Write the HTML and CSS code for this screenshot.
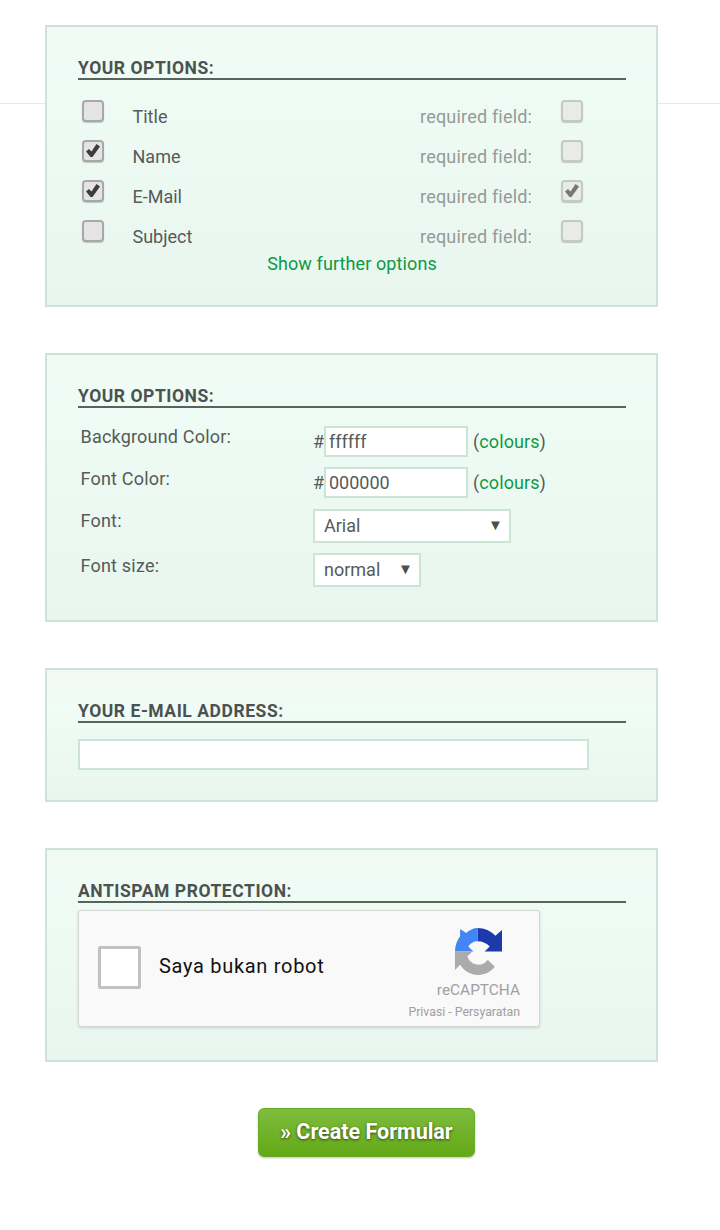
FILE: index.html
```html
<!DOCTYPE html>
<html lang="en">
  <head>
    <meta charset="UTF-8" />
    <meta name="viewport" content="width=device-width, initial-scale=1.0" />
    <title>Create Formular</title>
    <link rel="stylesheet" href="styles.css">
  </head>
  <body>
    <div class="hairline"></div>
    <form class="page">
      <div class="box">
        <h3>Your options:</h3>
        <div class="option-list">
          <div class="option">
            <span class="check"></span>
            <span>Title</span>
            <span class="req-label">required field:</span>
            <span class="check off"></span>
          </div>
          <div class="option">
            <span class="check">
              <svg viewBox="0 0 22 22"><path d="M4 11.5l3-2.5 2.5 2.5 5-7.5 3.5 2.5-7.5 10.5h-2z" /></svg>
            </span>
            <span>Name</span>
            <span class="req-label">required field:</span>
            <span class="check off"></span>
          </div>
          <div class="option">
            <span class="check">
              <svg viewBox="0 0 22 22"><path d="M4 11.5l3-2.5 2.5 2.5 5-7.5 3.5 2.5-7.5 10.5h-2z" /></svg>
            </span>
            <span>E-Mail</span>
            <span class="req-label">required field:</span>
            <span class="check off">
              <svg viewBox="0 0 22 22"><path d="M4 11.5l3-2.5 2.5 2.5 5-7.5 3.5 2.5-7.5 10.5h-2z" /></svg>
            </span>
          </div>
          <div class="option">
            <span class="check"></span>
            <span>Subject</span>
            <span class="req-label">required field:</span>
            <span class="check off"></span>
          </div>
        </div>
        <a class="link further" href="#">Show further options</a>
      </div>

      <div class="box">
        <h3>Your options:</h3>
        <div class="style-list">
          <div class="style-row">
            <label>Background Color:</label>
            <div class="field">
              <span class="hash">#</span>
              <input class="text-input color-input" type="text" value="ffffff">
              <span class="colours">(<a class="link" href="#">colours</a>)</span>
            </div>
          </div>
          <div class="style-row">
            <label>Font Color:</label>
            <div class="field">
              <span class="hash">#</span>
              <input class="text-input color-input" type="text" value="000000">
              <span class="colours">(<a class="link" href="#">colours</a>)</span>
            </div>
          </div>
          <div class="style-row tall">
            <label>Font:</label>
            <div class="select-wrap font-select">
              <select><option>Arial</option></select>
            </div>
          </div>
          <div class="style-row tall">
            <label>Font size:</label>
            <div class="select-wrap size-select">
              <select><option>normal</option></select>
            </div>
          </div>
        </div>
      </div>

      <div class="box">
        <h3>Your e-mail address:</h3>
        <input class="text-input email-input" type="text">
      </div>

      <div class="box">
        <h3>Antispam protection:</h3>
        <div class="captcha">
          <span class="captcha-box"></span>
          <span class="captcha-text">Saya bukan robot</span>
          <div class="captcha-brand">
            <svg class="captcha-logo" viewBox="0 0 46 46">
              <path fill="#1c3aa9" d="M22 0C29 0 35 3 39.5 7.5L46 2V23H29L34 18C31 15 27 13 22 13Z" />
              <path fill="#4285f4" d="M5 1L11 5C14 2 18 0 22 0V13C18 13 15 15 13 18L18 23H0C0 17 2 12 5 8Z" />
              <path fill="#ababab" d="M0 23H17L12 28C14 33 18 36 23 36C27 36 30 34 32 31L39 38C35 43 29 46 23 46C15 46 9 42 5 36L0 41Z" />
            </svg>
            <span class="captcha-name">reCAPTCHA</span>
            <span class="captcha-terms">Privasi - Persyaratan</span>
          </div>
        </div>
      </div>

      <div class="actions">
        <button class="submit" type="button">» Create Formular</button>
      </div>
    </form>
  </body>
</html>
```

FILE: styles.css
```css
body {
  font-family: Roboto, Arial, sans-serif;
  background-color: #fff;
  color: #555b58;
  margin: 0;
}

.hairline {
  position: absolute;
  top: 103px;
  left: 0;
  right: 0;
  height: 1px;
  background-color: #e4ebe7;
}

.page {
  position: relative;
  width: 613px;
  margin-left: 45px;
  padding-top: 25px;
  padding-bottom: 73px;
}

.box {
  box-sizing: border-box;
  display: flow-root;
  margin-bottom: 46px;
  padding: 31px 30px 31px 31px;
  border: 2px solid #cce4d5;
  background: linear-gradient(#f2f9f5 0, #effcf6 45px, #e9f6ef 100%);
}

.box h3 {
  margin: 0;
  height: 20px;
  font-size: 17.5px;
  line-height: 20px;
  letter-spacing: 0.55px;
  font-weight: 700;
  text-transform: uppercase;
  color: #4b524f;
  border-bottom: 2px solid #5a625e;
}

.link {
  color: #0d9a43;
  text-decoration: none;
}

.option-list {
  display: flex;
  flex-direction: column;
  gap: 3px;
  margin-top: 17px;
  padding-left: 4px;
}

.option {
  display: grid;
  grid-template-columns: 50.5px 287.5px 141px 22px;
  height: 37px;
  font-size: 18px;
  line-height: 26px;
}

.option > span:not(.check) {
  margin-top: 7px;
}

.req-label {
  color: #939b97;
  letter-spacing: 0.2px;
}

.check {
  box-sizing: border-box;
  width: 22px;
  height: 22px;
  margin-top: 3px;
  border: 2px solid #a8a8a8;
  border-radius: 4px;
  background-color: #e4e4e4;
  box-shadow: 0 1px 1px rgba(0, 0, 0, 0.2);
}

.check svg {
  display: block;
  width: 22px;
  height: 22px;
  margin: -2px;
  fill: #3d3d3d;
}

.check.off {
  border-color: #c6c8c6;
  background-color: #e9ebe9;
}

.check.off svg {
  fill: #777;
}

.further {
  display: block;
  text-align: center;
  font-size: 18px;
  line-height: 20px;
  letter-spacing: 0.1px;
}

.style-list {
  margin-top: 18px;
  padding-left: 2.5px;
  margin-bottom: 2px;
}

.style-row {
  display: grid;
  grid-template-columns: 232.5px 1fr;
  height: 31px;
  margin-bottom: 10px;
  font-size: 18px;
  letter-spacing: 0.2px;
  line-height: 22px;
}

.style-row:nth-child(2) {
  margin-bottom: 11px;
}

.style-row:nth-child(n+2) label {
  line-height: 24px;
}

.style-row.tall {
  height: 34px;
}

.style-row:last-child {
  margin-bottom: 0;
}

.style-row:last-child label {
  line-height: 26px;
}

.field {
  display: flex;
  align-items: center;
  font-size: 18px;
  letter-spacing: 0.1px;
}

.hash {
  width: 11px;
}

.colours {
  margin-left: 5px;
}

.text-input {
  box-sizing: border-box;
  height: 31px;
  padding: 0 3px;
  border: 2px solid #cce4d5;
  border-radius: 0;
  background-color: #fff;
  color: #555b58;
  font-family: Roboto, Arial, sans-serif;
  font-size: 18px;
  outline: none;
}

.color-input {
  width: 144px;
}

.email-input {
  display: block;
  width: 511px;
  margin-top: 16px;
  margin-bottom: -1px;
}

.select-wrap {
  position: relative;
  height: 34px;
}

.select-wrap::after {
  content: "▼";
  position: absolute;
  top: 0;
  right: 8px;
  font-size: 15px;
  line-height: 32px;
  color: #4b4f4d;
  pointer-events: none;
}

.font-select {
  width: 198px;
}

.size-select {
  width: 108px;
}

.select-wrap select {
  box-sizing: border-box;
  width: 100%;
  height: 34px;
  padding: 0 9px 2px;
  border: 2px solid #cce4d5;
  border-radius: 0;
  background-color: #fff;
  color: #555b58;
  font-family: Roboto, Arial, sans-serif;
  font-size: 18px;
  appearance: none;
  -webkit-appearance: none;
}

.captcha {
  box-sizing: border-box;
  display: flex;
  align-items: center;
  width: 462px;
  height: 117px;
  margin-top: 7px;
  margin-bottom: 2px;
  padding-left: 19px;
  padding-right: 19px;
  border: 1px solid #d6d6d6;
  border-radius: 3px;
  background-color: #f9f9f9;
  box-shadow: 0 1px 3px rgba(0, 0, 0, 0.15);
}

.captcha-box {
  box-sizing: border-box;
  width: 43px;
  height: 43px;
  margin-top: -2px;
  border: 3px solid #c1c1c1;
  border-radius: 2px;
  background-color: #fff;
}

.captcha-text {
  flex: 1;
  margin-top: -6px;
  margin-left: 18px;
  font-size: 20px;
  letter-spacing: 0.7px;
  color: #111;
}

.captcha-brand {
  display: flex;
  flex-direction: column;
  align-items: flex-end;
  align-self: flex-start;
  padding-top: 17px;
}

.captcha-logo {
  width: 47px;
  height: 47px;
  margin-right: 18px;
}

.captcha-name {
  margin-top: 5px;
  font-size: 15.4px;
  line-height: 20px;
  color: #a0a0a0;
}

.captcha-terms {
  margin-top: 5px;
  font-size: 12.3px;
  line-height: 14px;
  color: #a0a0a0;
}

.actions {
  display: flex;
  padding-left: 213px;
}

.submit {
  width: 217px;
  height: 49px;
  padding: 0 0 3px;
  border: 1px solid #69ab25;
  border-radius: 6px;
  background: linear-gradient(#7fbc3d, #63a917);
  box-shadow: 0 1px 2px rgba(0, 0, 0, 0.25);
  color: #fff;
  font-family: Roboto, Arial, sans-serif;
  font-size: 21.5px;
  font-weight: 700;
  text-shadow: 0 1px 3px rgba(0, 0, 0, 0.6);
}
```
